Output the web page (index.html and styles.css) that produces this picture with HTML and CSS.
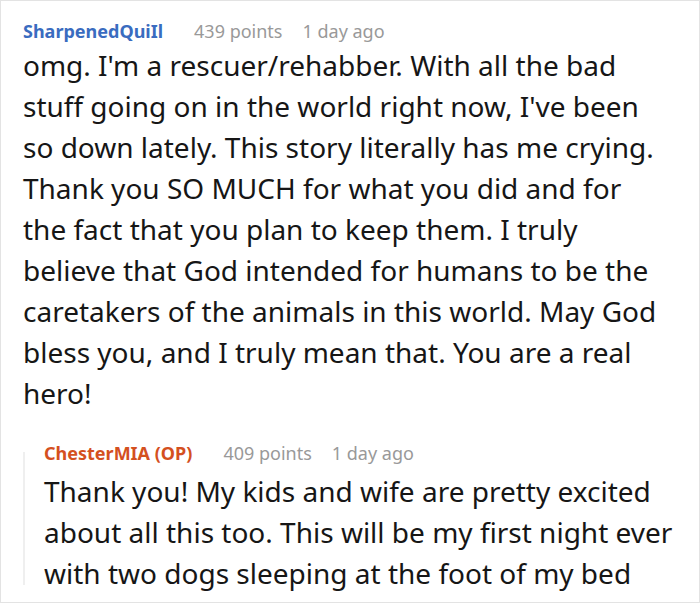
FILE: index.html
```html
<!DOCTYPE html>
<html>
<head>
<meta charset="utf-8">
<link rel="stylesheet" href="styles.css">
</head>
<body>
<div class="frame">
  <div class="comment">
    <div class="meta">
      <span class="author">SharpenedQuiIl</span>
      <span class="info">439 points</span>
      <span class="info">1 day ago</span>
    </div>
    <p class="body main">omg. I'm a rescuer/rehabber. With all the bad stuff going on in the world right now, I've been so down lately. This story literally has me crying. Thank you SO MUCH for what you did and for the fact that you plan to keep them. I truly believe that God intended for humans to be the caretakers of the animals in this world. May God bless you, and I truly mean that. You are a real hero!</p>
    <div class="reply">
      <div class="meta">
        <span class="author op">ChesterMIA (OP)</span>
        <span class="info">409 points</span>
        <span class="info">1 day ago</span>
      </div>
      <p class="body">Thank you! My kids and wife are pretty excited about all this too. This will be my first night ever with two dogs sleeping at the foot of my bed</p>
    </div>
  </div>
</div>
</body>
</html>
```

FILE: styles.css
```css
html, body {
  margin: 0;
  padding: 0;
  background: #ffffff;
}
.frame {
  width: 700px;
  height: 603px;
  box-sizing: border-box;
  border: 1px solid #e3e3e3;
  overflow: hidden;
  font-family: "Noto Sans", "Open Sans", sans-serif;
}
.comment {
  padding: 18px 20px 0 22px;
}
.meta {
  display: flex;
  gap: 20px;
  font-size: 18px;
  line-height: 24px;
}
.author {
  font-weight: bold;
  color: #3a6cc0;
  margin-right: 11px;
}
.author.op {
  color: #d4501f;
}
.info {
  color: #999999;
}
.body {
  margin: 2px 0 0 0;
  font-size: 28px;
  line-height: 41px;
  color: #161616;
}
.body.main {
  margin-right: 15px;
}
.reply {
  position: relative;
  margin: 27px 0 0 0;
  padding-left: 21px;
}
.reply::before {
  content: "";
  position: absolute;
  left: 0;
  top: 11px;
  bottom: 9px;
  width: 2px;
  background: #efefef;
}
.reply .body {
  margin-top: 6px;
}
```
